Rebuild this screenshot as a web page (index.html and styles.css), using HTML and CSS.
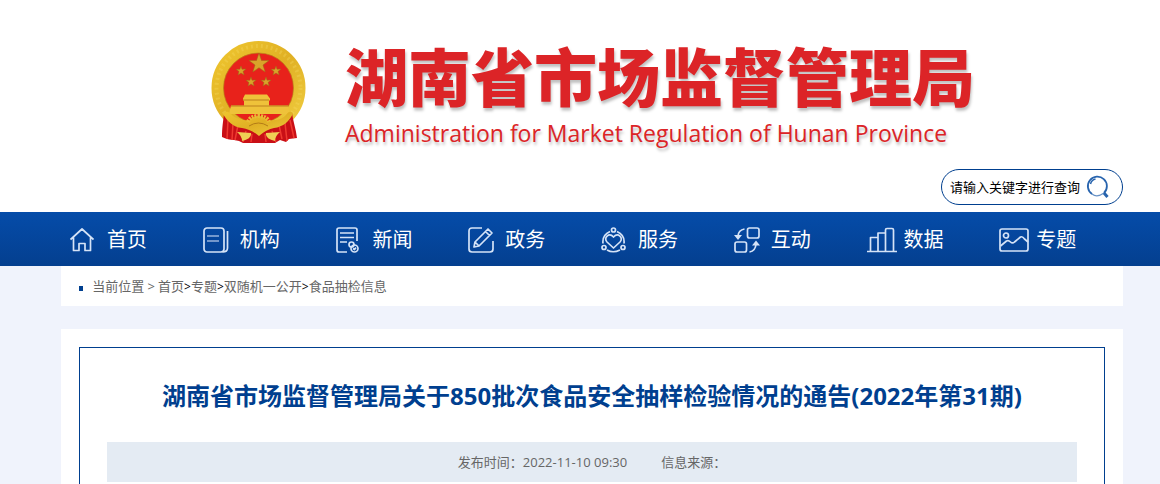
FILE: index.html
```html
<!DOCTYPE html>
<html lang="zh-CN">
<head>
    <meta charset="utf-8">
    <title>湖南省市场监督管理局</title>
    <meta name="viewport" content="width=device-width, initial-scale=1">
    <link rel="stylesheet" href="styles.css">
</head>
<body>
    <header class="header wrap">
        <a class="logo" href="#">
            <svg class="emblem" viewBox="10 9 98 104" aria-hidden="true">
                <defs>
                    <linearGradient id="gold" x1="0" y1="0" x2="1" y2="1">
                        <stop offset="0" stop-color="#eec52f"/>
                        <stop offset=".5" stop-color="#e0b024"/>
                        <stop offset="1" stop-color="#f0cd40"/>
                    </linearGradient>
                </defs>
                <circle cx="59.500" cy="57" r="41" fill="#e8221b" stroke="url(#gold)" stroke-width="12"/>
                <circle cx="59.500" cy="57" r="42" fill="none" stroke="#f7df68" stroke-width="4" stroke-dasharray="2 3" opacity=".3"/>
                <circle cx="59.500" cy="57" r="35" fill="none" stroke="#b98518" stroke-width=".7"/>
                <g fill="#d9a32a" stroke="#9b6b16" stroke-width=".5">
                    <path d="M60 22l2.500 7.500h7.500l-6 4.500 2.200 7-6.200-4.300-6.200 4.300 2.200-7-6-4.500h7.500z"/>
                    <path d="M42 35l1 3.200 4-.2-3 2.500 1.200 3.500-3.200-2-3 2 1-3.500-3-2.200h3.800z"/>
                    <path d="M77 35l1 3.200 4-.2-3 2.500 1.200 3.500-3.200-2-3 2 1-3.500-3-2.200h3.800z"/>
                    <path d="M52 46l1 3.200 4-.2-3 2.500 1.200 3.500-3.200-2-3 2 1-3.500-3-2.200h3.800z"/>
                    <path d="M67 46l1 3.200 4-.2-3 2.500 1.200 3.500-3.200-2-3 2 1-3.500-3-2.200h3.800z"/>
                </g>
                <path d="M46 63.500h22l3 4v2h-1v5h19l2 8.500H30l2-8.500h13v-5h-1v-2z" fill="#efc23a"/>
                <path d="M44 69h26M32 75h57" stroke="#bb801d"/>
                <path d="M25 83c-1 8-2 14-2 23 4 2 8 3 12 3l5 1 4 2h32l5-3 6 2 3-3 8-1c-1-9-4-17-5-25-5 8-12 11-19 11H44c-8 0-13-3-19-10z" fill="#c90f16"/>
                <path d="M29 89l-1 19M34 92l-1 17M39 94l-3 15M86 92l2 18M91 89l4 18M80 94l3 14M47 100l-3 11M73 100l4 11M53 103l-1 8M66 103l1 8" stroke="#ef3930" stroke-width="1.500"/>
                <path d="M24 83c4-4 6-2 10 2 5 4 11 4 16 5 2-3 5-5 9-5s8 2 10 5c7-1 13-1 17-5 3-3 4-6 8-3-3 8-10 14-19 15-5 1-9 3-15 8-6-5-11-7-17-8-9-1-15-7-19-14z" fill="url(#gold)"/>
                <path d="M49 91q2-6 10.500-6t10.500 6" fill="none" stroke="#e9bd35" stroke-width="4" stroke-dasharray="2 1"/>
                <path d="M50 95q9.500-6 19 0" fill="none" stroke="#b37c17"/>
                <path d="M38 101l14 1q1 6-9 8 0-5-5-9zM81 101l-14 1q-1 6 9 8 0-5 5-9z" fill="#efcf54"/>
            </svg>
            <span class="logo-text">
                <strong class="logo-name">湖南省市场监督管理局</strong>
                <span class="logo-en" lang="en">Administration for Market Regulation of Hunan Province</span>
            </span>
        </a>
        <form class="search" role="search">
            <input class="search-input" type="text" aria-label="搜索" placeholder="请输入关键字进行查询">
            <button class="search-btn" type="button" aria-label="查询">
                <svg width="24" height="24" viewBox="0 0 24 24" fill="none" stroke="#2864ae">
                    <path d="M6 19A9.500 9.500 0 1 1 18 18" stroke-width="1.800"/>
                    <path d="M6 19q5 4 12-1" stroke-width="1.200" opacity=".7"/>
                    <path d="M4.500 9q1-4 5-5" stroke-width="1.500"/>
                    <path d="M18 18l3.500 4" stroke-width="3"/>
                </svg>
            </button>
        </form>
    </header>

    <nav class="nav">
        <ul class="nav-list wrap">
            <li><a href="#">
                <svg width="24" height="26" viewBox="0 0 24 26"><path d="M.5 12.500L12 2l11.500 10.500M3.500 10v13.500h5.500v-7h6v7h5.500V10"/></svg>
                <span>首页</span></a></li>
            <li><a href="#">
                <svg width="26" height="26" viewBox="0 0 26 26"><rect x="1" y="1" width="20" height="24" rx="3"/><path d="M4 9h12M4 14h12" opacity=".7"/><path d="M24.500 4v17q0 4-5 4"/></svg>
                <span>机构</span></a></li>
            <li><a href="#">
                <svg width="24" height="26" viewBox="0 0 24 26"><path d="M11 25H3q-2 0-2-2V3q0-2 2-2h16q2 0 2 2v11M4 6h14M4 10.500h14M4 15h7"/><circle cx="15.500" cy="17.500" r="2.500"/><circle cx="18.500" cy="21.500" r="3.500"/><path d="M17 21.500l1.500 1 1.500-2"/></svg>
                <span>新闻</span></a></li>
            <li><a href="#">
                <svg width="26" height="26" viewBox="0 0 26 26"><path d="M14 1H4Q1 1 1 4v18q0 3 3 3h18q3 0 3-3v-8M6 20l1-5L20 2l4 4-13 13zM7 15l4 4M17.500 4.500l4 4"/></svg>
                <span>政务</span></a></li>
            <li><a href="#">
                <svg width="26" height="26" viewBox="0 0 26 26"><circle cx="12.500" cy="3" r="2"/><circle cx="3" cy="20.500" r="2"/><circle cx="22" cy="20.500" r="2"/><path d="M9 4.500Q1 8 2 16.500M16 4.500q8 3.500 7 12M6 23q6 3.500 13 0M12.500 21l-6.500-6c-4-4 2-10 6.500-5 4.500-5 10.500 1 6.500 5z"/></svg>
                <span>服务</span></a></li>
            <li><a href="#">
                <svg width="26" height="26" viewBox="0 0 26 26"><rect x="13.500" y="1" width="11.500" height="10" rx="2"/><rect x="1" y="15" width="11.500" height="10" rx="2"/><path d="M10.500 2Q4.500 3 4 9M15.500 25q6-1 6.500-8"/><path d="M0 8h8l-4 5zM18 18.500h8l-4-5z" class="fill"/></svg>
                <span>互动</span></a></li>
            <li><a href="#">
                <svg width="30" height="26" viewBox="0 0 30 26"><path d="M0 24.500h30M3.500 24V10.500H11M11 24V6h7.500M18.500 24V3q0-1.500 1.500-1.500h5q1.500 0 1.500 1.500v21"/></svg>
                <span>数据</span></a></li>
            <li><a href="#">
                <svg width="30" height="26" viewBox="0 0 30 26"><rect x="1" y="2" width="28" height="22" rx="2"/><circle cx="7" cy="8.500" r="2.500"/><path d="M1.500 19l6-5q2-1 4 1t4 0l6-5q2-1 4 2l3.500 3"/></svg>
                <span>专题</span></a></li>
        </ul>
    </nav>

    <main class="wrap">
        <div class="crumbs">
            <span class="crumbs-label">当前位置 &gt;</span>
            <a href="#">首页</a>&gt;<a href="#">专题</a>&gt;<a href="#">双随机一公开</a>&gt;<a href="#">食品抽检信息</a>
        </div>

        <div class="panel">
            <article class="article">
                <h1>湖南省市场监督管理局关于850批次食品安全抽样检验情况的通告(2022年第31期)</h1>
                <div class="meta">
                    <span>发布时间：2022-11-10 09:30</span>
                    <span>信息来源：</span>
                </div>
            </article>
        </div>
    </main>
</body>
</html>
```
FILE: styles.css
```css
* { box-sizing: border-box; }
body { margin: 0; background: #f0f3fc; color: #000; font: 13px/20px "Open Sans", "Noto Sans CJK SC", sans-serif; }
a { color: inherit; text-decoration: none; }
ul { margin: 0; padding: 0; list-style: none; }

.wrap { padding: 0 37px 0 61px; }

.header { background: #fff; padding-top: 40px; padding-bottom: 7px; }
.logo { display: flex; justify-content: center; align-items: flex-start; gap: 38px; color: #dc2427; }
.emblem { width: 98px; height: 104px; flex: none; }
.logo-text { display: flex; flex-direction: column; white-space: nowrap; text-shadow: 1px 3px 3px rgba(0, 0, 0, .25); }
.logo-name { font-size: 63px; line-height: 74px; font-weight: 900; }
.logo-en { font-size: 23px; line-height: 38px; }

.search { display: flex; align-items: center; width: 182px; height: 36px; margin: 17px 0 0 auto; padding: 0 12px 0 8px; border: 1px solid #003f8f; border-radius: 18px; }
.search-input { flex: 1; min-width: 0; padding: 0; border: 0; outline: 0; background: none; font: inherit; }
.search-input::placeholder { color: #000; opacity: 1; }
.search-btn { width: 24px; height: 24px; padding: 0; border: 0; background: none; cursor: pointer; }
.search-btn svg { display: block; }

.nav { background: linear-gradient(#054ca9, #043f8f); color: #fff; font-size: 20px; }
.nav-list { display: flex; }
.nav li { flex: 1; }
.nav a { display: grid; grid-template-columns: 37px auto; align-items: center; height: 54px; padding: 2px 0 0 9px; line-height: 32px; }
.nav svg { fill: none; stroke: #d5e3f7; stroke-width: 1.7; stroke-linejoin: round; }
.nav svg .fill { fill: #d5e3f7; stroke: none; }

.crumbs { height: 40px; padding-left: 18px; background: #fff; font-size: 12px; line-height: 40px; }
.crumbs::before { content: ""; display: inline-block; width: 4px; height: 5px; margin-right: 6px; background: #003f8f; }
.crumbs a, .crumbs-label { color: #666; font-size: 13px; }

.panel { margin-top: 23px; padding: 18px; background: #fff; }
.article { padding: 28px 27px; border: 1px solid #003f8f; }
.article h1 { margin: 0 0 26px; color: #003f8f; font-size: 24px; line-height: 40px; text-align: center; }
.meta { display: flex; justify-content: center; gap: 34px; background: #e4ebf3; color: #666; line-height: 40px; }
```
